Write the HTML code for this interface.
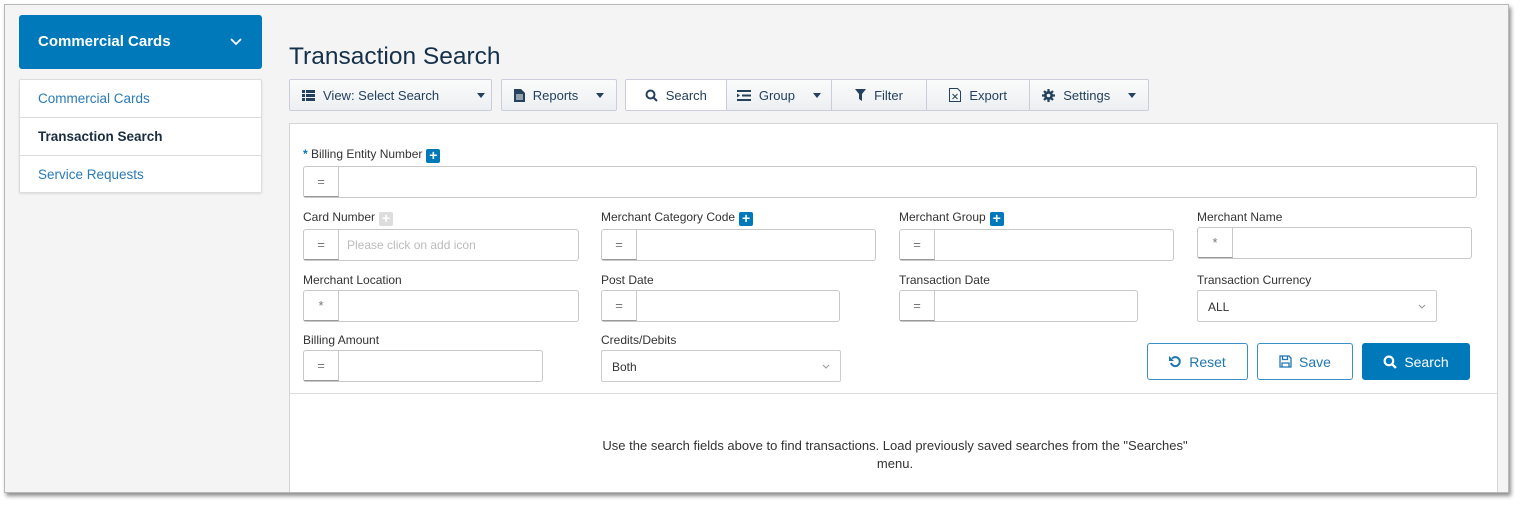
<!DOCTYPE html>
<html><head><style>
*{box-sizing:border-box;margin:0;padding:0}
body{width:1521px;height:506px;background:#fff;font-family:"Liberation Sans",sans-serif;position:relative;overflow:hidden}
.frame{position:absolute;left:4px;top:4px;width:1505px;height:489px;background:#f4f4f4;border:1px solid #b8b8b8;box-shadow:2px 3px 4px rgba(0,0,0,.45);overflow:hidden}
.a{position:absolute}
.side-h{left:14px;top:10px;width:243px;height:54px;background:#0079bb;border-radius:3px;color:#fff;font-weight:bold;font-size:15px;padding:18px 0 0 19px}
.list{left:14px;top:74px;width:243px;height:114px;background:#fff;border:1px solid #ddd;border-radius:2px;box-shadow:0 1px 2px rgba(0,0,0,.1)}
.list div{height:38px;border-bottom:1px solid #ddd;padding:11px 0 0 18px;font-size:13.5px;color:#2a7ab5}
.list div:last-child{border:none}
h1{position:absolute;left:284px;top:38px;font-weight:normal;font-size:24.5px;color:#14304a}
.tb{height:32px;top:74px;border:1px solid #ccd;background:linear-gradient(#fbfbfb,#eceff2);font-size:13px;color:#24415d;display:flex;align-items:center;border-radius:2px}
.tb span{display:flex;align-items:center;justify-content:center;height:100%;border-right:1px solid #ccd;gap:8px}
.tb span:last-child{border:none}
.car{width:0;height:0;border-left:4px solid transparent;border-right:4px solid transparent;border-top:5px solid #24415d;margin-left:10px}
.panel{left:284px;top:118px;width:1209px;height:380px;background:#fff;border:1px solid #d5d5d5}
.lbl{font-size:12px;color:#333}
.ig{height:32px;border:1px solid #c8c8c8;border-radius:3px;display:flex;background:#fff}
.ig .p{width:35px;border-right:1px solid #c8c8c8;display:flex;align-items:center;justify-content:center;color:#777;font-size:13px;border-bottom:1px solid #999}
.ig .ph{padding:8px;color:#bbb;font-size:12px}
.sel{height:32px;border:1px solid #ccc;border-radius:2px;font-size:12px;color:#333;padding:9px 0 0 10px;background:#fff}
.sel svg{position:absolute;right:10px;top:13px}
.plus{display:inline-block;width:14px;height:14px;background:#0079bb;border-radius:2px;color:#fff;font-weight:bold;font-size:14px;line-height:13px;text-align:center;vertical-align:-2px;margin-left:4px}
.btn{height:37px;border:1px solid #3a8fc6;border-radius:3px;color:#2176b0;font-size:14px;display:flex;align-items:center;justify-content:center;gap:7px;background:#fff}
</style></head><body>
<div class="frame">
<div class="a side-h">Commercial Cards<svg class="a" style="right:20px;top:23px" width="12" height="8" viewBox="0 0 12 8"><path d="M1 1l5 5 5-5" fill="none" stroke="#fff" stroke-width="1.8"/></svg></div>
<div class="a list"><div>Commercial Cards</div><div style="color:#1b2d40;font-weight:bold">Transaction Search</div><div>Service Requests</div></div>
<h1>Transaction Search</h1>
<div class="a tb" style="left:284px;width:203px"><span style="width:100%;justify-content:flex-start;padding-left:12px"><svg width="13" height="11" viewBox="0 0 13 11"><path d="M0 0h3v3H0zM4 0h9v3H4zM0 4h3v3H0zM4 4h9v3H4zM0 8h3v3H0zM4 8h9v3H4z" fill="#24415d"/></svg>View: Select Search<b class="car" style="margin-left:30px"></b></span></div>
<div class="a tb" style="left:496px;width:116px"><span style="width:100%"><svg width="11" height="13" viewBox="0 0 11 13"><path d="M0 0h7l4 4v9H0z" fill="#24415d"/><path d="M2 6h7M2 8h7M2 10h7" stroke="#fff"/></svg>Reports<b class="car"></b></span></div>
<div class="a tb" style="left:620px;width:524px">
<span style="width:101px;background:#fff">
<svg width="13" height="13" viewBox="0 0 13 13"><circle cx="5.5" cy="5.5" r="4" fill="none" stroke="#24415d" stroke-width="2"/><path d="M8.5 8.5l3.5 3.5" stroke="#24415d" stroke-width="2"/></svg>Search</span>
<span style="width:106px"><svg width="14" height="11" viewBox="0 0 14 11"><path d="M0 0h14v2H0zM5 4.5h9v2H5zM0 9h14v2H0zM0 3.5l3 2-3 2z" fill="#24415d"/></svg>Group<b class="car"></b></span>
<span style="width:95px"><svg width="11" height="12" viewBox="0 0 11 12"><path d="M0 0h11L7 5v7L4 10V5z" fill="#24415d"/></svg>Filter</span>
<span style="width:104px"><svg width="12" height="14" viewBox="0 0 12 14"><path d="M.5.5h8l3 3v10H.5z" fill="none" stroke="#24415d"/><path d="M3.5 6l5 5M8.5 6l-5 5" stroke="#24415d"/></svg>Export</span>
<span style="width:118px"><svg width="13" height="13" viewBox="0 0 13 13"><circle cx="6.5" cy="6.5" r="4.5" fill="#24415d"/><path d="M6.5 0v13M0 6.5h13M2 2l9 9M11 2l-9 9" stroke="#24415d" stroke-width="2.2"/><circle cx="6.5" cy="6.5" r="1.8" fill="#f4f4f4"/></svg>Settings<b class="car"></b></span>
</div>
<div class="a panel">
<div class="a lbl" style="left:13px;top:23px"><span style="color:#0079bb;font-weight:bold">*</span> Billing Entity Number<span class="plus">+</span></div>
<div class="a ig" style="left:13px;top:42px;width:1174px"><div class="p">=</div></div>

<div class="a lbl" style="left:13px;top:86px">Card Number<span class="plus" style="background:#ddd">+</span></div>
<div class="a ig" style="left:13px;top:105px;width:276px"><div class="p">=</div><div class="ph">Please click on add icon</div></div>
<div class="a lbl" style="left:311px;top:86px">Merchant Category Code<span class="plus">+</span></div>
<div class="a ig" style="left:311px;top:105px;width:275px"><div class="p">=</div></div>
<div class="a lbl" style="left:609px;top:86px">Merchant Group<span class="plus">+</span></div>
<div class="a ig" style="left:609px;top:105px;width:275px"><div class="p">=</div></div>
<div class="a lbl" style="left:907px;top:86px">Merchant Name</div>
<div class="a ig" style="left:907px;top:103px;width:275px"><div class="p">*</div></div>

<div class="a lbl" style="left:13px;top:149px">Merchant Location</div>
<div class="a ig" style="left:13px;top:166px;width:276px"><div class="p">*</div></div>
<div class="a lbl" style="left:311px;top:149px">Post Date</div>
<div class="a ig" style="left:311px;top:166px;width:239px"><div class="p">=</div></div>
<div class="a lbl" style="left:609px;top:149px">Transaction Date</div>
<div class="a ig" style="left:609px;top:166px;width:239px"><div class="p">=</div></div>
<div class="a lbl" style="left:907px;top:149px">Transaction Currency</div>
<div class="a sel" style="left:907px;top:166px;width:240px">ALL<svg width="8" height="5" viewBox="0 0 8 5"><path d="M1 1l3 3 3-3" fill="none" stroke="#999"/></svg></div>

<div class="a lbl" style="left:13px;top:209px">Billing Amount</div>
<div class="a ig" style="left:13px;top:226px;width:240px"><div class="p">=</div></div>
<div class="a lbl" style="left:311px;top:209px">Credits/Debits</div>
<div class="a sel" style="left:311px;top:226px;width:240px">Both<svg width="8" height="5" viewBox="0 0 8 5"><path d="M1 1l3 3 3-3" fill="none" stroke="#999"/></svg></div>

<div class="a btn" style="left:857px;top:219px;width:101px"><svg width="13" height="13" viewBox="0 0 13 13"><path d="M3 3.5A4.5 4.5 0 1 1 2 8" fill="none" stroke="#2176b0" stroke-width="2"/><path d="M0 1v5h5z" fill="#2176b0"/></svg>Reset</div>
<div class="a btn" style="left:967px;top:219px;width:96px"><svg width="13" height="13" viewBox="0 0 13 13"><path d="M1 1h9l2 2v9H1z M3.5 1v3.5h5V1 M3 12V8h7v4" fill="none" stroke="#2176b0" stroke-width="1.3"/></svg> Save</div>
<div class="a btn" style="left:1072px;top:219px;width:108px;background:#0079bb;color:#fff;border-color:#0079bb"><svg width="14" height="14" viewBox="0 0 13 13"><circle cx="5.5" cy="5.5" r="4" fill="none" stroke="#fff" stroke-width="2"/><path d="M8.5 8.5l3.5 3.5" stroke="#fff" stroke-width="2.2"/></svg>Search</div>

<div class="a" style="left:0;top:269px;width:1207px;border-top:1px solid #ddd"></div>
<div class="a" style="left:300px;top:313px;width:610px;text-align:center;font-size:13px;color:#333;line-height:18px">Use the search fields above to find transactions. Load previously saved searches from the "Searches" menu.</div>
</div>
</div>
</body></html>
